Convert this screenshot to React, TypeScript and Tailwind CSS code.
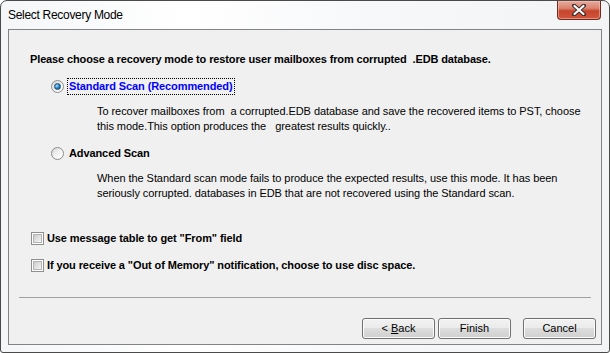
import React, { useState } from 'react';

const sans = { fontFamily: '"Liberation Sans", Arial, sans-serif' };

function Radio({ checked }: { checked: boolean }) {
  return (
    <span className="relative flex h-[13px] w-[13px] shrink-0 items-center justify-center rounded-full border border-[#8c8c8c] bg-gradient-to-br from-[#d6d6d6] via-[#f2f2f2] to-[#ffffff]">
      {checked && (
        <span className="h-[7px] w-[7px] rounded-full border border-[#1d4a6e] bg-[radial-gradient(circle_at_35%_35%,#a8e4ff_0%,#2c8ed8_45%,#0b3a66_100%)]" />
      )}
    </span>
  );
}

function Checkbox({ checked }: { checked: boolean }) {
  return (
    <span className="flex h-[13px] w-[13px] shrink-0 items-center justify-center border border-[#8e8f8f] bg-white">
      <span className="h-[9px] w-[9px] border border-[#b4b4b4] bg-gradient-to-br from-[#cbcbcb] to-[#f6f6f6]">
        {checked && <span className="block text-[9px] leading-[9px]">✓</span>}
      </span>
    </span>
  );
}

function Button({ children, className = '' }: { children: React.ReactNode; className?: string }) {
  return (
    <button
      type="button"
      className={`h-[21px] w-[73px] rounded-[3px] border border-[#707070] bg-[linear-gradient(#f2f2f2_0%,#ebebeb_45%,#dddddd_50%,#cfcfcf_100%)] text-[11px] leading-[19px] text-black shadow-[inset_0_0_0_1px_#fcfcfc] ${className}`}
      style={sans}
    >
      {children}
    </button>
  );
}

export default function App() {
  const [mode, setMode] = useState<'standard' | 'advanced'>('standard');
  const [fromField, setFromField] = useState(false);
  const [disc, setDisc] = useState(false);

  return (
    <div className="h-[353px] w-[610px] overflow-hidden bg-white">
      <div className="flex h-[353px] w-[610px] flex-col rounded-t-[7px] rounded-b-[3px] border border-[#4a4a4a] bg-[linear-gradient(90deg,#f4f6f8,#ffffff_30%,#f7f8fa_60%,#f2f4f6)] px-[7px] pb-[7px]">
        {/* title bar */}
        <div className="flex h-[28px] shrink-0 items-start justify-between">
          <span className="mt-[6px] text-[12px] leading-[16px] tracking-[-0.3px] text-black" style={sans}>
            Select Recovery Mode
          </span>
          <span className="mr-[1px] flex h-[19px] w-[44px] items-center justify-center rounded-b-[4px] border border-t-0 border-[#6f2b1f] bg-[linear-gradient(#e9a99a_0%,#d98470_40%,#c7452d_55%,#d0563c_100%)] shadow-[inset_0_0_0_1px_rgba(255,200,190,0.5)]">
            <svg width="14" height="12" viewBox="0 0 14 12">
              <path d="M2 1.5 L12 10.5 M12 1.5 L2 10.5" stroke="#3a2a2a" strokeWidth="4" strokeLinecap="round" />
              <path d="M2.5 2 L11.5 10 M11.5 2 L2.5 10" stroke="#ffffff" strokeWidth="2.2" strokeLinecap="round" />
            </svg>
          </span>
        </div>

        {/* client area */}
        <div className="flex flex-1 flex-col border border-[#838383] bg-[#f0f0f0] text-[11px] text-black" style={sans}>
          <p className="ml-[21px] mt-[22px] h-[15px] font-bold leading-[15px] tracking-[-0.13px]">
            Please choose a recovery mode to restore user mailboxes from corrupted&nbsp;&nbsp;.EDB database.
          </p>

          <label className="ml-[42px] mt-[11px] flex h-[17px] cursor-default items-center" onClick={() => setMode('standard')}>
            <Radio checked={mode === 'standard'} />
            <span className="ml-[3px] border border-dotted border-black px-[1px] font-bold leading-[15px] tracking-[-0.1px] text-[#0000ff]">
              Standard Scan (Recommended)
            </span>
          </label>
          <p className="ml-[88px] mt-[9px] w-[500px] leading-[15px] tracking-[-0.06px]">
            To recover mailboxes from&nbsp;&nbsp;a corrupted.EDB database and save the recovered items to PST, choose
            <br />
            this mode.This option produces the&nbsp;&nbsp;&nbsp;greatest results quickly..
          </p>

          <label className="ml-[42px] mt-[11px] flex h-[17px] cursor-default items-center" onClick={() => setMode('advanced')}>
            <Radio checked={mode === 'advanced'} />
            <span className="ml-[4px] px-[1px] font-bold leading-[15px] tracking-[-0.1px]">Advanced Scan</span>
          </label>
          <p className="ml-[88px] mt-[9px] w-[500px] leading-[15px] tracking-[-0.06px]">
            When the Standard scan mode fails to produce the expected results, use this mode. It has been
            <br />
            seriously corrupted. databases in EDB that are not recovered using the Standard scan.
          </p>

          <label className="ml-[22px] mt-[30px] flex h-[15px] cursor-default items-center" onClick={() => setFromField(!fromField)}>
            <Checkbox checked={fromField} />
            <span className="ml-[3px] font-bold leading-[15px] tracking-[-0.1px]">Use message table to get "From" field</span>
          </label>
          <label className="ml-[22px] mt-[12px] flex h-[15px] cursor-default items-center" onClick={() => setDisc(!disc)}>
            <Checkbox checked={disc} />
            <span className="ml-[3px] font-bold leading-[15px] tracking-[-0.1px]">If you receive a "Out of Memory" notification, choose to use disc space.</span>
          </label>

          <div className="ml-[10px] mr-[10px] mt-[24px] h-px bg-[#a0a0a0]" />

          <div className="mr-[5px] mt-[20px] flex justify-end">
            <Button>
              &lt; <span className="underline">B</span>ack
            </Button>
            <Button className="ml-[3px]">Finish</Button>
            <Button className="ml-[12px]">Cancel</Button>
          </div>
        </div>
      </div>
    </div>
  );
}
